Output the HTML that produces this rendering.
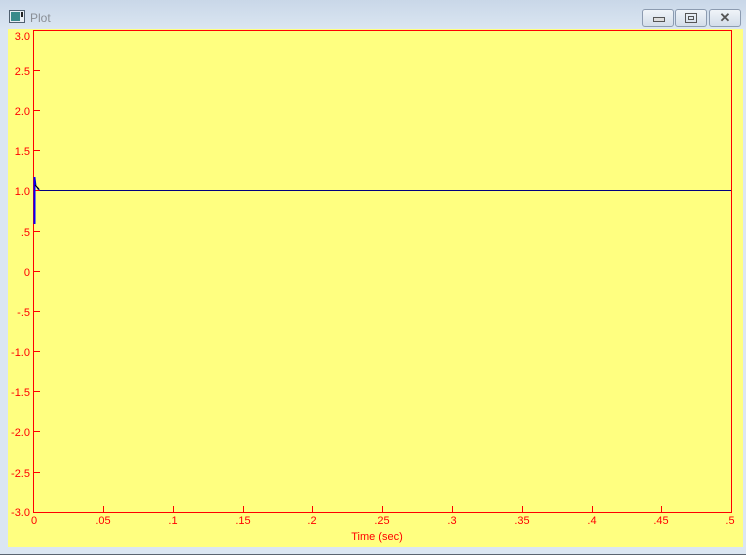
<!DOCTYPE html>
<html><head><style>
body{margin:0;width:746px;height:558px;overflow:hidden;background:#fff;font-family:"Liberation Sans",sans-serif}
.win{position:absolute;left:0;top:0;width:746px;height:554px;background:linear-gradient(#c9d7e8,#dbe6f2 30px,#dbe6f2);border-bottom:1px solid #5a6470}
.title{position:absolute;left:30px;top:11px;font-size:12px;color:#8a8f96}
.btn{position:absolute;top:9px;height:16px;border:1px solid #8c9bb0;border-radius:3px;background:linear-gradient(#f0f4f9,#d3dde9)}
.client{position:absolute;left:8px;top:29px;width:735px;height:518px;background:#ffff80}
</style></head><body>
<div class="win">
<svg style="position:absolute;left:9px;top:10px" width="16" height="14"><rect x="0.5" y="0.5" width="15" height="12" fill="#e8eef4" stroke="#506070"/><rect x="2" y="2" width="9" height="9" fill="#3a8a8a"/><rect x="12" y="2" width="2" height="5" fill="#222"/></svg>
<div class="title">Plot</div>
<div class="btn" style="left:642px;width:30px"><div style="position:absolute;left:10px;top:7px;width:10px;height:3px;border:1px solid #555;background:#ddd"></div></div>
<div class="btn" style="left:675px;width:30px"><div style="position:absolute;left:9px;top:3px;width:10px;height:8px;border:1px solid #555"><div style="margin:2px;height:2px;border:1px solid #555"></div></div></div>
<div class="btn" style="left:709px;width:30px;text-align:center;font-size:13px;line-height:16px;color:#555;font-weight:bold">✕</div>
<div class="client"></div>
<svg style="position:absolute;left:0;top:0" width="746" height="558" font-family="Liberation Sans, sans-serif" font-size="11" fill="#ff0000">
<rect x="33.5" y="30.5" width="698" height="482" fill="none" stroke="#ff0000"/>
<g stroke="#ff0000">
<line x1="34" y1="70.5" x2="40" y2="70.5"/><line x1="34" y1="110.5" x2="40" y2="110.5"/><line x1="34" y1="150.5" x2="40" y2="150.5"/><line x1="34" y1="190.5" x2="40" y2="190.5"/><line x1="34" y1="231.5" x2="40" y2="231.5"/><line x1="34" y1="271.5" x2="40" y2="271.5"/><line x1="34" y1="311.5" x2="40" y2="311.5"/><line x1="34" y1="351.5" x2="40" y2="351.5"/><line x1="34" y1="391.5" x2="40" y2="391.5"/><line x1="34" y1="431.5" x2="40" y2="431.5"/><line x1="34" y1="472.5" x2="40" y2="472.5"/>
<line x1="103.5" y1="506" x2="103.5" y2="512"/><line x1="173.5" y1="506" x2="173.5" y2="512"/><line x1="243.5" y1="506" x2="243.5" y2="512"/><line x1="312.5" y1="506" x2="312.5" y2="512"/><line x1="382.5" y1="506" x2="382.5" y2="512"/><line x1="452.5" y1="506" x2="452.5" y2="512"/><line x1="522.5" y1="506" x2="522.5" y2="512"/><line x1="592.5" y1="506" x2="592.5" y2="512"/><line x1="661.5" y1="506" x2="661.5" y2="512"/>
</g>
<g text-anchor="end">
<text x="30" y="40">3.0</text><text x="30" y="75">2.5</text><text x="30" y="115">2.0</text><text x="30" y="155">1.5</text><text x="30" y="195">1.0</text><text x="30" y="236">.5</text><text x="30" y="276">0</text><text x="30" y="316">-.5</text><text x="30" y="356">-1.0</text><text x="30" y="396">-1.5</text><text x="30" y="436">-2.0</text><text x="30" y="477">-2.5</text><text x="30" y="516">-3.0</text>
</g>
<g text-anchor="middle">
<text x="34" y="524">0</text><text x="103" y="524">.05</text><text x="173" y="524">.1</text><text x="243" y="524">.15</text><text x="312" y="524">.2</text><text x="382" y="524">.25</text><text x="452" y="524">.3</text><text x="522" y="524">.35</text><text x="592" y="524">.4</text><text x="661" y="524">.45</text><text x="730" y="524">.5</text>
<text x="377" y="540">Time (sec)</text>
</g>
<line x1="34.5" y1="177" x2="34.5" y2="224" stroke="#0000ff" stroke-width="2"/>
<line x1="40" y1="190.5" x2="731" y2="190.5" stroke="#000080" stroke-width="1"/>
<path d="M35 178 L36 186 L38 189 L40 190.5" fill="none" stroke="#0000c0" stroke-width="1"/>
<path d="M35 185 L39 189" stroke="#000" stroke-width="1"/>
</svg>
</div>
</body></html>
